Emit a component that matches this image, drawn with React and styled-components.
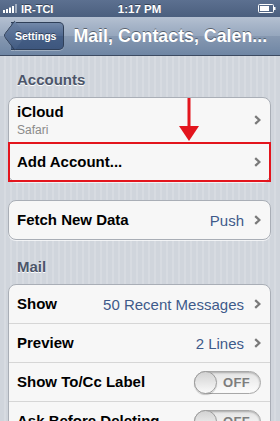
import styled, { createGlobalStyle } from "styled-components";

const GlobalStyle = createGlobalStyle`
  html, body {
    margin: 0;
    padding: 0;
    overflow: hidden;
  }
  body {
    font-family: "Liberation Sans", Arial, sans-serif;
    background: #d3d7de;
  }
`;

const Screen = styled.div`
  width: 280px;
  height: 421px;
  overflow: hidden;
  display: flex;
  flex-direction: column;
`;

const StatusBar = styled.div`
  height: 17px;
  flex-shrink: 0;
  background: linear-gradient(#5c7090, #4b5f7e);
  display: grid;
  grid-template-columns: 1fr auto 1fr;
  align-items: center;
  padding: 0 4px 0 3px;
  color: #fff;
  font-weight: bold;
  font-size: 11px;
  text-shadow: 0 -1px 0 rgba(0, 0, 0, 0.4);
`;

const Carrier = styled.div`
  display: flex;
  align-items: center;
  gap: 3px;
`;

const Clock = styled.div`
  font-size: 11.5px;
`;

const Battery = styled.div`
  justify-self: end;
  display: flex;
  align-items: center;
`;

const NavBar = styled.div`
  height: 38px;
  flex-shrink: 0;
  background: linear-gradient(#b4c0d1 0%, #95a6bd 50%, #8698b1 51%, #6f86a4 100%);
  border-bottom: 1px solid #3d4b62;
  display: flex;
  align-items: center;
  padding-left: 5px;
  gap: 9px;
`;

const BackButton = styled.div`
  position: relative;
  height: 26px;
  display: flex;
  align-items: center;
  padding: 0 7px 0 4px;
  margin-left: 6px;
  background: linear-gradient(#7389a9, #4f6890 50%, #445e86 51%, #3e577e);
  border: 1px solid #2f3f58;
  border-left: none;
  border-radius: 0 5px 5px 0;
  color: #fff;
  font-weight: bold;
  font-size: 10.5px;
  text-shadow: 0 -1px 0 rgba(0, 0, 0, 0.45);
  box-shadow: 0 1px 0 rgba(255, 255, 255, 0.3);

  &::before {
    content: "";
    position: absolute;
    left: -6px;
    top: 3px;
    width: 18px;
    height: 18px;
    transform: rotate(45deg) skew(8deg, 8deg);
    background: linear-gradient(135deg, #6a81a3, #415a81);
    border-left: 1px solid #2f3f58;
    border-bottom: 1px solid #2f3f58;
    border-radius: 0 0 0 3px;
    z-index: 0;
  }

  span {
    position: relative;
    z-index: 1;
  }
`;

const Title = styled.div`
  color: #fff;
  font-weight: bold;
  font-size: 17.8px;
  white-space: nowrap;
  text-shadow: 0 -1px 0 rgba(0, 0, 0, 0.45);
`;

const Content = styled.div`
  flex: 1;
  padding: 15px 9px 0 8px;
  background: repeating-linear-gradient(
    90deg,
    #d0d5dc 0px,
    #d0d5dc 4px,
    #d7dbe1 4px,
    #d7dbe1 6px
  );
`;

const Header = styled.div`
  font-size: 15px;
  line-height: 18px;
  font-weight: bold;
  color: #4b5569;
  text-shadow: 0 1px 0 #fff;
  padding-left: 9px;
  margin-bottom: 8px;
`;

const Group = styled.div`
  position: relative;
  background: #f7f7f7;
  border: 1px solid #a9aeb6;
  border-radius: 8px;
  margin-bottom: 18px;
  box-shadow: 0 1px 0 rgba(255, 255, 255, 0.7);
`;

const Row = styled.div`
  position: relative;
  height: ${(p) => p.h || 38}px;
  display: flex;
  align-items: center;
  padding: 0 9px 0 8px;
  border-top: ${(p) => (p.first ? "none" : "1px solid #d6d6d6")};

  ${(p) =>
    p.highlight &&
    `
    &::after {
      content: "";
      position: absolute;
      left: -1px;
      right: -1px;
      top: -1px;
      bottom: -1px;
      border: 2px solid #e3151d;
    }
  `}
`;

const LabelBlock = styled.div`
  flex: 1;
  display: flex;
  flex-direction: column;
`;

const Label = styled.div`
  font-size: 15px;
  line-height: 18px;
  font-weight: bold;
  color: #000;
`;

const Sub = styled.div`
  font-size: 12px;
  line-height: 14px;
  color: #8a8a8a;
  margin-top: 2px;
`;

const Value = styled.div`
  font-size: 15px;
  color: #3e5a8a;
  margin-right: 10px;
`;

const ToggleBox = styled.div`
  position: relative;
  flex-shrink: 0;
  width: 67px;
  height: 23px;
  border: 1px solid #a8a8a8;
  border-radius: 12px;
  background: linear-gradient(#e4e4e4, #fdfdfd);
  box-shadow: inset 0 1px 2px rgba(0, 0, 0, 0.25);
  display: flex;
  align-items: center;
  justify-content: flex-end;
  padding-right: 10px;
  box-sizing: border-box;
  color: #7d7d7d;
  font-weight: bold;
  font-size: 13px;
  letter-spacing: 0.3px;
`;

const Knob = styled.div`
  position: absolute;
  left: -1px;
  top: -1px;
  width: 23px;
  height: 23px;
  box-sizing: border-box;
  border-radius: 50%;
  border: 1px solid #9c9c9c;
  background: linear-gradient(#d2d2d2, #fafafa);
  box-shadow: 0 1px 1px rgba(0, 0, 0, 0.2);
`;

const ArrowMark = styled.svg`
  position: absolute;
  left: 168px;
  top: 0;
`;

const Chevron = () => (
  <svg width="7" height="10" viewBox="0 0 7 10">
    <path d="M1.2 1.2 L5.4 5 L1.2 8.8" fill="none" stroke="#7a7a7a" strokeWidth="2.3" />
  </svg>
);

const Toggle = () => (
  <ToggleBox>
    <Knob />
    OFF
  </ToggleBox>
);

const Signal = () => (
  <svg width="15" height="9" viewBox="0 0 15 9">
    <rect x="0" y="6" width="2" height="3" fill="#fff" />
    <rect x="3" y="5" width="2" height="4" fill="#fff" />
    <rect x="6" y="3.5" width="2" height="5.5" fill="#fff" />
    <rect x="9" y="2" width="2" height="7" fill="#fff" />
    <rect x="12" y="0" width="2" height="9" fill="#fff" opacity="0.45" />
  </svg>
);

const BatteryIcon = () => (
  <svg width="18" height="9" viewBox="0 0 18 9">
    <rect x="0.5" y="0.5" width="15" height="8" rx="1" fill="none" stroke="#fff" />
    <rect x="2" y="2" width="9" height="5" fill="#fff" />
    <rect x="16" y="3" width="1.5" height="3" fill="#fff" />
  </svg>
);

export default function App() {
  return (
    <>
      <GlobalStyle />
      <Screen>
        <StatusBar>
          <Carrier>
            <Signal />
            IR-TCI
          </Carrier>
          <Clock>1:17 PM</Clock>
          <Battery>
            <BatteryIcon />
          </Battery>
        </StatusBar>
        <NavBar>
          <BackButton>
            <span>Settings</span>
          </BackButton>
          <Title>Mail, Contacts, Calen...</Title>
        </NavBar>
        <Content>
          <Header>Accounts</Header>
          <Group>
            <Row first h={44}>
              <LabelBlock>
                <Label>iCloud</Label>
                <Sub>Safari</Sub>
              </LabelBlock>
              <Chevron />
            </Row>
            <Row highlight>
              <LabelBlock>
                <Label>Add Account...</Label>
              </LabelBlock>
              <Chevron />
            </Row>
            <ArrowMark width="24" height="44" viewBox="0 0 24 44">
              <rect x="10.5" y="0" width="3" height="30" fill="#e3151d" />
              <polygon points="2,28 22,28 12,43" fill="#e3151d" />
            </ArrowMark>
          </Group>
          <Group>
            <Row first>
              <LabelBlock>
                <Label>Fetch New Data</Label>
              </LabelBlock>
              <Value>Push</Value>
              <Chevron />
            </Row>
          </Group>
          <Header>Mail</Header>
          <Group>
            <Row first>
              <LabelBlock>
                <Label>Show</Label>
              </LabelBlock>
              <Value>50 Recent Messages</Value>
              <Chevron />
            </Row>
            <Row>
              <LabelBlock>
                <Label>Preview</Label>
              </LabelBlock>
              <Value>2 Lines</Value>
              <Chevron />
            </Row>
            <Row>
              <LabelBlock>
                <Label>Show To/Cc Label</Label>
              </LabelBlock>
              <Toggle />
            </Row>
            <Row>
              <LabelBlock>
                <Label>Ask Before Deleting</Label>
              </LabelBlock>
              <Toggle />
            </Row>
          </Group>
        </Content>
      </Screen>
    </>
  );
}
